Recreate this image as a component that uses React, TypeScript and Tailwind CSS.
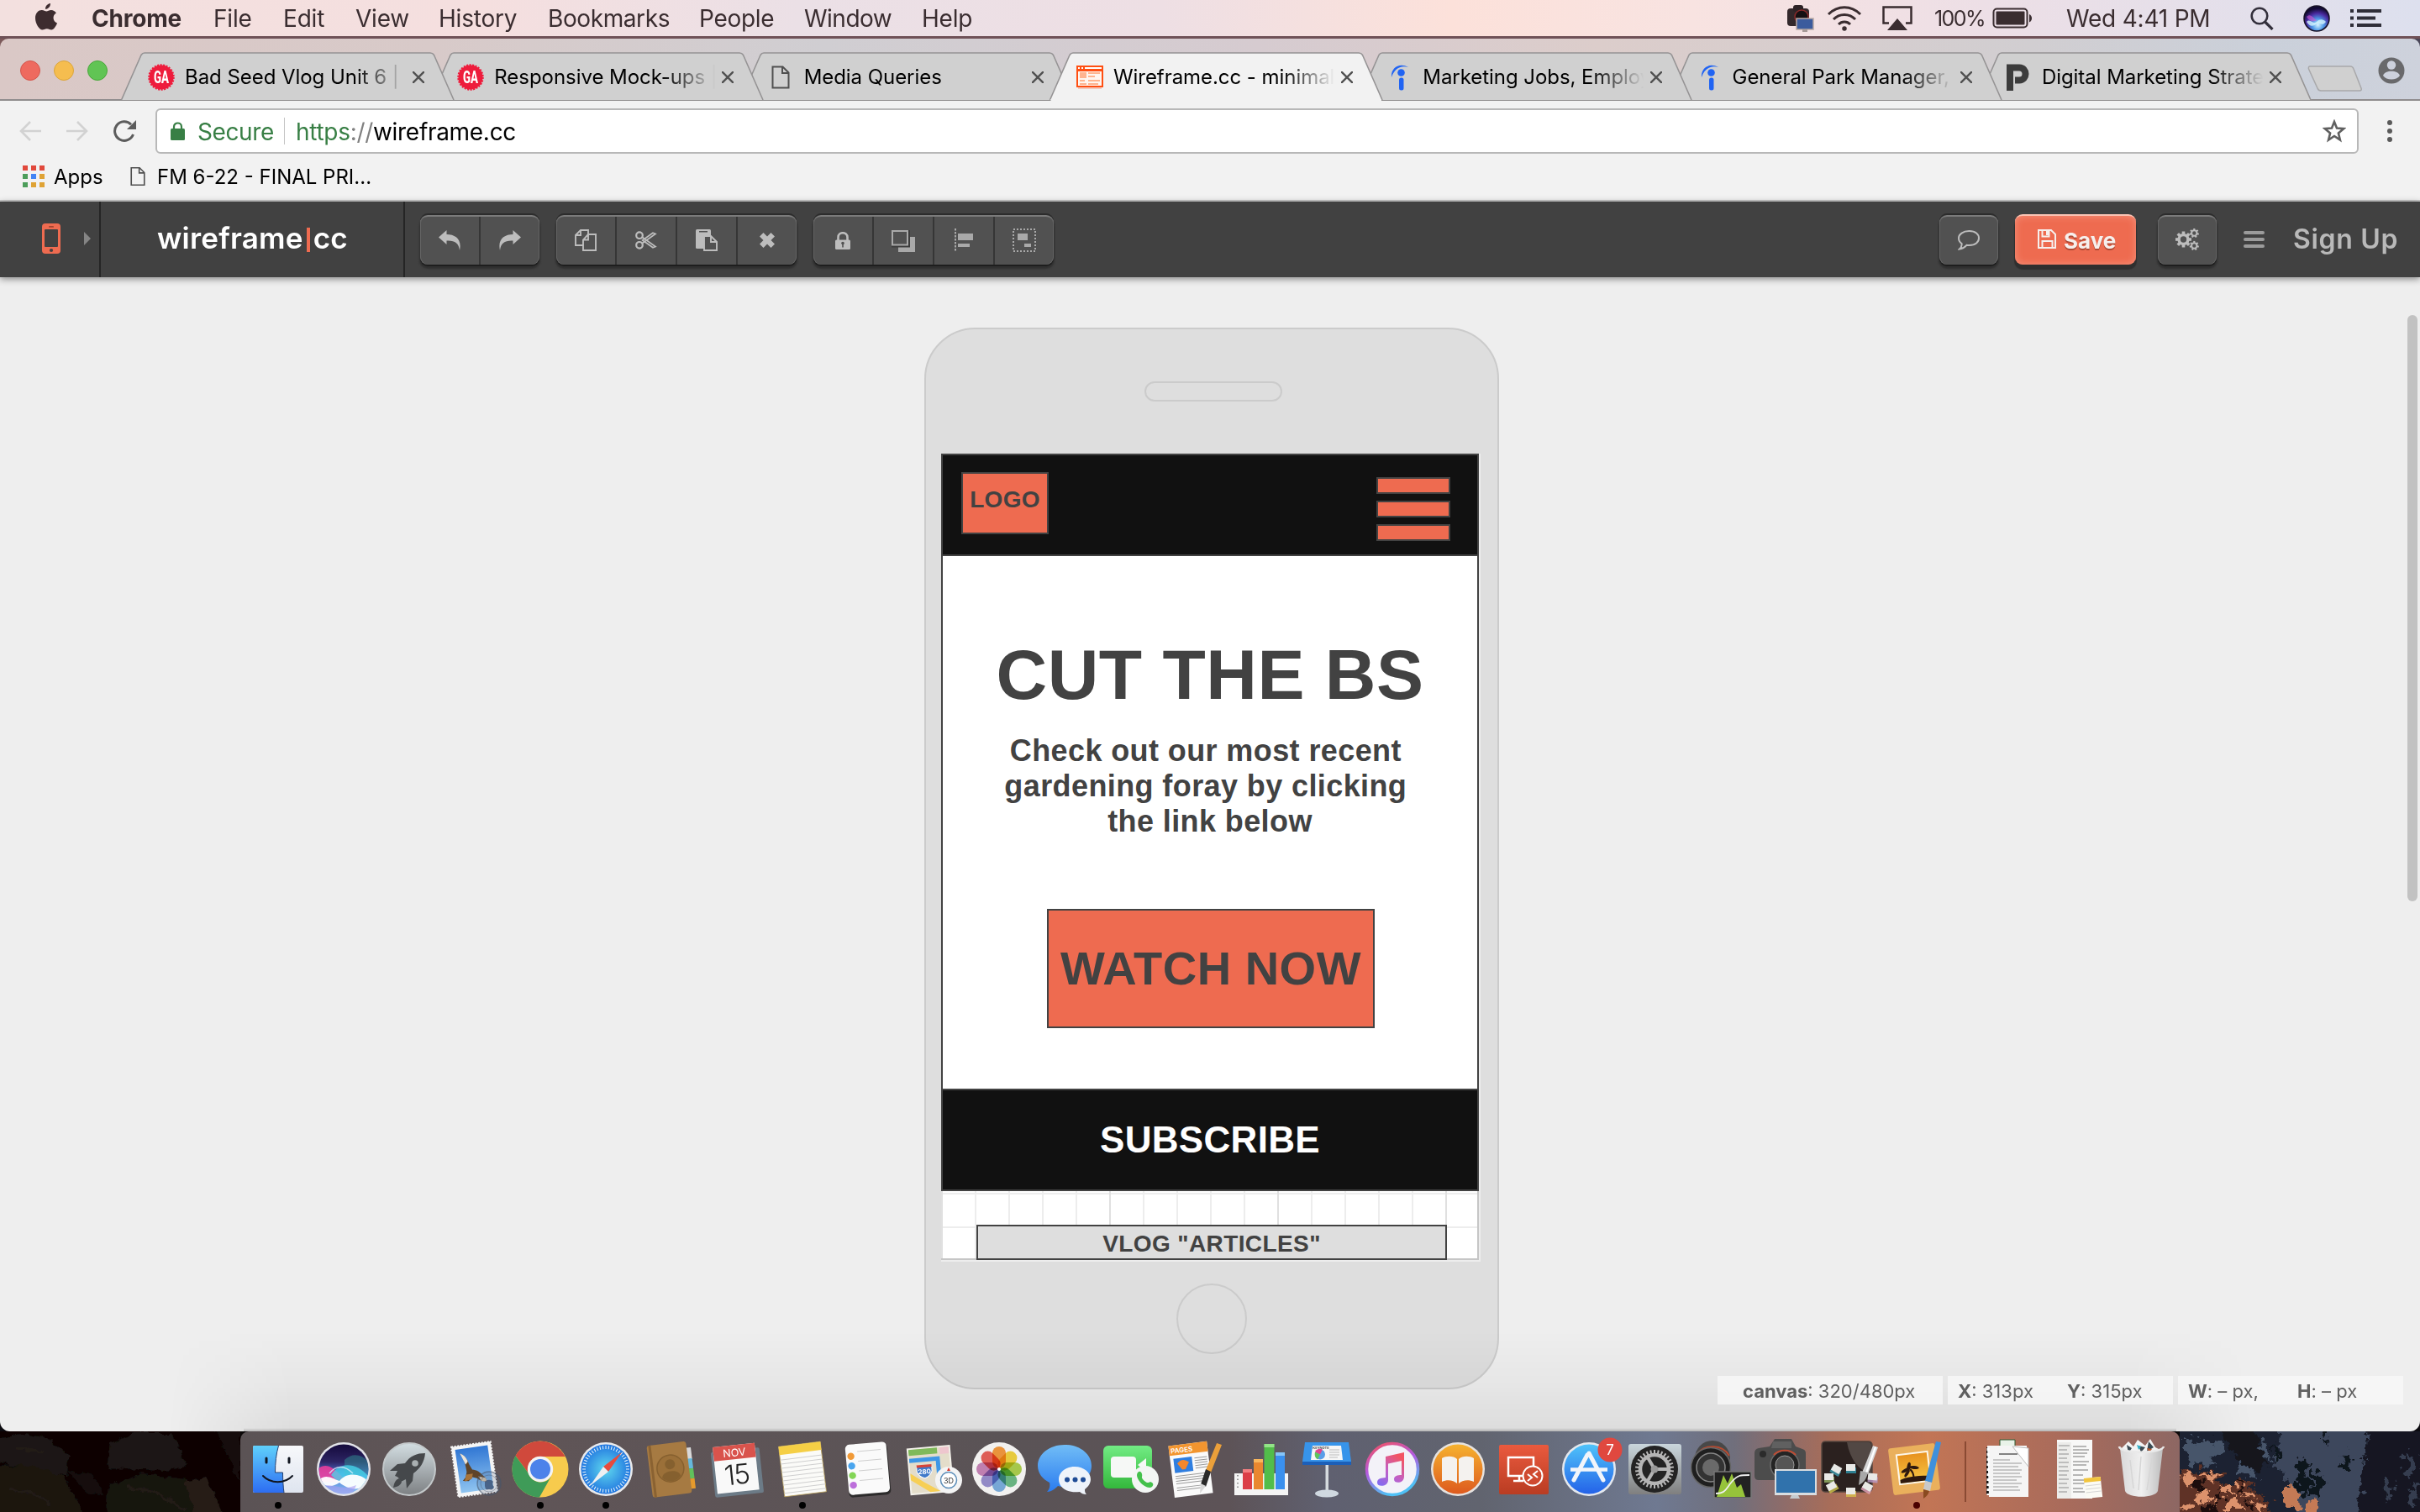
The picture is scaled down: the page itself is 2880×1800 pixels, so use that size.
import React from "react";

type Kids = { children?: React.ReactNode };

/* ---------- macOS menu bar ---------- */

const menus = [
  { t: "Chrome", c: "w-[145px] font-bold" },
  { t: "File", c: "w-[83px]" },
  { t: "Edit", c: "w-[86px]" },
  { t: "View", c: "w-[99px]" },
  { t: "History", c: "w-[130px]" },
  { t: "Bookmarks", c: "w-[180px] tracking-[-0.4px]" },
  { t: "People", c: "w-[125px] tracking-[-0.3px]" },
  { t: "Window", c: "w-[140px] tracking-[-0.5px]" },
  { t: "Help", c: "w-[80px]" },
];

function Apple({ className }: { className: string }) {
  return (
    <svg viewBox="0 0 26 32" className={className} fill="currentColor">
      <path d="M18 0c.3 3.600-2.800 7-6 6.800C11.600 3.600 14.800.3 18 0z" />
      <path d="M13.300 9.500c1.400 0 3-1.500 5.600-1.500 2.300 0 4.700 1.300 6 3.400-5 2.900-4.200 9.900 1.100 12C24.700 27 22 31.400 19.200 31.500c-2 0-2.700-1.300-5.400-1.300s-3.400 1.300-5.400 1.300C4.700 31.400 0 24 0 17.500 0 11.300 4 8 7.700 8c2.400 0 4 1.500 5.600 1.500z" />
    </svg>
  );
}

function MenuBar() {
  return (
    <div className="flex h-[46px] items-center border-b-[3px] border-[#6f5157] bg-[linear-gradient(90deg,#f3e0df,#f5dfdf_20%,#ebe0e6_33%,#eedfe4_48%,#fce1da_60%,#f8e3e1_70%,#eddfe6_82%,#dde0ee)] pl-[42px] text-[28px] leading-[44px] tracking-[-0.2px] text-[#3a2d30]">
      <Apple className="mb-[3px] mr-[41px] h-[32px] w-[26px] shrink-0 text-[#3d2c2f]" />
      {menus.map((m) => (
        <span key={m.t} className={"shrink-0 whitespace-nowrap " + m.c}>
          {m.t}
        </span>
      ))}
      <div className="ml-[949px] flex items-center">
        <svg viewBox="0 0 34 34" className="h-[34px] w-[34px]">
          <rect x="1" y="5" width="26" height="21" rx="4" fill="#33282b" />
          <rect x="8" y="1" width="12" height="8" rx="3" fill="#2d2326" />
          <circle cx="18" cy="15" r="8" fill="#151012" stroke="#8a2a2a" strokeWidth="1.500" />
          <rect x="12" y="17" width="20" height="13" fill="#3b5b9d" stroke="#b9a9a4" strokeWidth="1.500" />
          <path d="M19 30h6v3h-6z" fill="#a79a98" />
        </svg>
        <svg viewBox="0 0 42 30" className="ml-[14px] h-[30px] w-[42px]" fill="none" stroke="#3a2d30" strokeWidth="3">
          <path d="M2 10C13-1 29-1 40 10M8 16c7-7.500 19-7.500 26 0M14 22c4-4 10-4 14 0" />
          <circle cx="21" cy="27" r="2" fill="#3a2d30" strokeWidth="1.500" />
        </svg>
        <svg viewBox="0 0 36 30" className="ml-[24px] h-[30px] w-[36px]">
          <path d="M8 20.500H1.500v-19h33v19H28" fill="none" stroke="#3a2d30" strokeWidth="2.500" />
          <path d="M18 15l12 14H6z" fill="#3a2d30" />
        </svg>
        <span className="ml-[26px] w-[69px] text-[25px] tracking-[-1.600px]">100%</span>
        <svg viewBox="0 0 48 26" className="h-[26px] w-[48px]">
          <rect x="1.500" y="1.500" width="40" height="22" rx="4" fill="none" stroke="#3a2d30" strokeWidth="2" />
          <rect x="4.500" y="4.500" width="34" height="16" rx="1" fill="#3a2d30" />
          <path d="M44 8c4 1.500 4 8 0 9.500z" fill="#3a2d30" />
        </svg>
        <span className="ml-[40px] w-[219px] whitespace-nowrap tracking-[-0.200px]">Wed 4:41 PM</span>
        <svg viewBox="0 0 28 28" className="h-[28px] w-[28px]" fill="none" stroke="#33303c" strokeWidth="2.600">
          <circle cx="11" cy="11" r="9.300" />
          <path d="M17.500 18l9 9" strokeWidth="3.200" />
        </svg>
        <svg viewBox="0 0 32 32" className="ml-[35px] h-[32px] w-[32px]">
          <defs>
            <radialGradient id="mb-siri" cx="55%" cy="75%" r="65%">
              <stop offset="0" stopColor="#d9f4ff" />
              <stop offset="0.350" stopColor="#4f9be8" />
              <stop offset="0.700" stopColor="#4a2aa0" />
              <stop offset="1" stopColor="#120a33" />
            </radialGradient>
          </defs>
          <circle cx="16" cy="16" r="15" fill="url(#mb-siri)" stroke="#151024" strokeWidth="1.500" />
          <path d="M4 20c4-5 8 4 12 0s8-3 11 0c-4 6-8 0-12 3s-8 2-11-3z" fill="#d5f4fc" opacity=".8" />
          <path d="M4 14c5-5 8 2 12 4-4 3-9 1-12-4z" fill="#d45ad0" opacity=".6" />
        </svg>
        <svg viewBox="0 0 38 22" className="ml-[24px] h-[22px] w-[38px]" fill="#2f2e38">
          <path d="M0 0h4v4H0zM8 0h29v4H8zM0 8.500h4v4H0zM8 8.500h22v4H8zM0 17h4v4H0zM8 17h29v4H8z" />
        </svg>
      </div>
    </div>
  );
}

/* ---------- Chrome tabs ---------- */

function GaIcon() {
  return (
    <svg viewBox="0 0 32 32" className="h-[32px] w-[32px]">
      <circle cx="16" cy="16" r="14.500" fill="#ee1c3c" stroke="#ee1c3c" strokeWidth="2.500" strokeDasharray="2 1.500" />
      <text transform="translate(16 23) scale(.68 1)" textAnchor="middle" fontSize="19.500" fontWeight="800" fill="#fff" fontFamily="Roboto">
        GA
      </text>
    </svg>
  );
}

function DocIcon({ className }: { className: string }) {
  return (
    <svg viewBox="0 0 22 28" className={className} fill="none" stroke="#505050" strokeWidth="2">
      <path d="M1.500 1.500h12l7 7v18h-19zM13 1.500v7.500h7.500" />
    </svg>
  );
}

function WireIcon() {
  return (
    <svg viewBox="0 0 32 28" className="h-[28px] w-[32px]">
      <path d="M2 26h28v2H2z" fill="#f3c9bd" />
      <path d="M0 0h32v26H0z" fill="#ff4f12" />
      <path d="M2 7h28v17H2z" fill="#fff6f0" />
      <path d="M2 2h2v2H2zM6 2h2v2H6zM10 2h20v2H10z" fill="#fff" />
      <path d="M4 8h8v7H4zM14 8h14v2H14zM14 12h8v2h-8zM4 17h6v2H4zM14 17h14v2H14zM4 21h8v2H4zM14 21h12v2H14z" fill="#ffb48f" />
    </svg>
  );
}

function IndeedIcon() {
  return (
    <svg viewBox="0 0 32 32" className="h-[32px] w-[32px]">
      <path d="M7 16C6 5 16-2 27 4 17 1 10 7 7 16z" fill="#2164f3" />
      <circle cx="18.500" cy="10.500" r="4.300" fill="#2164f3" />
      <rect x="16" y="16.500" width="5.500" height="15" rx="2.500" fill="#2164f3" />
    </svg>
  );
}

function PIcon() {
  return (
    <svg viewBox="0 0 32 32" className="h-[32px] w-[32px]" fill="none" stroke="#3c3c3c" strokeWidth="8">
      <path d="M6 32V4.500H17c10 0 10 15 0 15H12" />
    </svg>
  );
}

const tabs = [
  { t: "Bad Seed Vlog Unit 6 |", icon: <GaIcon />, z: "z-[7]", active: false },
  { t: "Responsive Mock-ups |", icon: <GaIcon />, z: "z-[6]", active: false },
  { t: "Media Queries", icon: <DocIcon className="ml-[5px] h-[28px] w-[22px]" />, z: "z-[5]", active: false },
  { t: "Wireframe.cc - minimal", icon: <WireIcon />, z: "z-[9]", active: true },
  { t: "Marketing Jobs, Employ", icon: <IndeedIcon />, z: "z-[4]", active: false },
  { t: "General Park Manager,", icon: <IndeedIcon />, z: "z-[3]", active: false },
  { t: "Digital Marketing Strate", icon: <PIcon />, z: "z-[2]", active: false },
];

function TabStrip() {
  return (
    <div className="flex h-[74px] rounded-t-[10px] border-b-2 border-[#8f8c8d] bg-[linear-gradient(90deg,#dac8c6,#d8cac9_18%,#d0ced2_34%,#d6cbd0_52%,#dccdcb_66%,#d1ced1_84%,#cad0da_94%,#ced2dc)]">
      <div className="flex w-[144px] shrink-0 items-center gap-[16px] pl-[24px] pt-[4px]">
        <span className="h-[24px] w-[24px] rounded-full border border-[#d4554c] bg-[#ee6a5f]" />
        <span className="h-[24px] w-[24px] rounded-full border border-[#dba53a] bg-[#f5bd4f]" />
        <span className="h-[24px] w-[24px] rounded-full border border-[#4aa73c] bg-[#61c454]" />
      </div>
      {tabs.map((tab) => (
        <div key={tab.t} className={"relative -mr-[28.200px] mt-[16px] h-[58px] w-[396.500px] shrink-0 " + tab.z}>
          <svg viewBox="0 0 396.500 58" className="absolute inset-0 h-[58px] w-[396.500px] overflow-visible">
            <path
              d="M.5 57L24 3.500Q25.500 1 28 1H368Q371 1 372.500 3.500L396 57"
              fill={tab.active ? "#f2f2f2" : "#d0d0d0"}
              stroke="#959394"
              strokeWidth="1.600"
            />
            {tab.active && <path d="M1.500 56h393.500v2H1.500z" fill="#f2f2f2" />}
          </svg>
          <div className="relative flex h-[58px] items-center pl-[32px] pt-[1px]">
            <span className="flex w-[44px]">{tab.icon}</span>
            <span className="w-[266px] overflow-hidden whitespace-pre text-[24px] leading-[32px] tracking-[-0.050px] text-black [mask-image:linear-gradient(90deg,#000_76%,transparent_99%)]">
              {tab.t}
            </span>
            <svg viewBox="0 0 14 14" className="ml-[5px] h-[14px] w-[14px]" stroke="#515151" strokeWidth="2.400">
              <path d="M0 0l14 14M14 0L0 14" />
            </svg>
          </div>
        </div>
      ))}
      <svg viewBox="0 0 66 32" className="ml-[24px] mt-[32px] h-[32px] w-[66px]">
        <path d="M3 1h48q3 0 4 3l9 23q1 3-2 3H16q-3 0-4-3L1.500 4Q1 1 3 1z" fill="#d0d0d0" stroke="#a8a8aa" strokeWidth="1.500" />
      </svg>
      <svg viewBox="0 0 32 32" className="ml-[18px] mt-[22px] h-[32px] w-[32px]">
        <circle cx="16" cy="16" r="15.500" fill="#69696b" />
        <circle cx="16" cy="9.500" r="5.200" fill="#cdd1dc" />
        <path d="M6 22c2-7 18-7 20 0-4 6-16 6-20 0z" fill="#cdd1dc" />
      </svg>
    </div>
  );
}

/* ---------- Chrome address and bookmark bars ---------- */

function AddressBar() {
  return (
    <div className="flex h-[72px] items-center bg-[#f2f2f2] pl-[23px]">
      <svg viewBox="0 0 26 24" className="h-[24px] w-[26px]" fill="none" stroke="#d2d2d2" strokeWidth="2.600">
        <path d="M26 12H2M13 1L2 12l11 11" />
      </svg>
      <svg viewBox="0 0 26 24" className="ml-[30px] h-[24px] w-[26px]" fill="none" stroke="#d2d2d2" strokeWidth="2.600">
        <path d="M0 12h24M13 1l11 11-11 11" />
      </svg>
      <svg viewBox="0 0 28 26" className="ml-[29px] h-[26px] w-[28px]" fill="none" stroke="#5c5c5c" strokeWidth="3">
        <path d="M24.500 17A11.300 11.300 0 1 1 22 5.200" />
        <path d="M28 0v11H17z" fill="#5c5c5c" stroke="none" />
      </svg>
      <div className="ml-[23px] flex h-[54px] w-[2622px] items-center rounded-[6px] border-2 border-[#b8b8b8] bg-white pl-[16px] text-[28px]">
        <svg viewBox="0 0 17 22" className="mb-[1px] h-[22px] w-[17px]">
          <rect y="8" width="17" height="14" rx="1.500" fill="#387f45" />
          <path d="M4 9V6c0-6 9-6 9 0v3" fill="none" stroke="#387f45" strokeWidth="2.200" />
        </svg>
        <span className="ml-[15px] w-[103px] pt-[2px] tracking-[-0.400px] text-[#387f45]">Secure</span>
        <span className="h-[32px] w-[1px] bg-[#c4c4c4]" />
        <span className="ml-[13px] grow whitespace-nowrap pt-[2px] tracking-[-0.300px] text-black">
          <span className="text-[#387f45]">https</span>
          <span className="text-[#808080]">://</span>wireframe.cc
        </span>
        <svg viewBox="0 0 28 28" className="mr-[13px] h-[28px] w-[28px]" fill="none" stroke="#606060" strokeWidth="2.600">
          <path d="M14 3l3 7.600 8.200.6-6.300 5.300 2 8L14 20l-6.900 4.500 2-8-6.300-5.300 8.200-.6z" />
        </svg>
      </div>
      <div className="ml-[34px] flex flex-col gap-[4px]">
        <span className="h-[6px] w-[6px] rounded-full bg-[#5a5a5a]" />
        <span className="h-[6px] w-[6px] rounded-full bg-[#5a5a5a]" />
        <span className="h-[6px] w-[6px] rounded-full bg-[#5a5a5a]" />
      </div>
    </div>
  );
}

const appDots = [
  "bg-[#e1493c]", "bg-[#e1493c]", "bg-[#e1493c]",
  "bg-[#4d9e5b]", "bg-[#4285f4]", "bg-[#dfa335]",
  "bg-[#4d9e5b]", "bg-[#dfa335]", "bg-[#dfa335]",
];

function BookmarkBar() {
  return (
    <div className="flex h-[48px] items-center border-b-2 border-[#c9c9c9] bg-[#f2f2f2] pb-[11px] pl-[27px] text-[24px] text-black">
      <div className="grid grid-cols-3 gap-[4px]">
        {appDots.map((c, i) => (
          <span key={i} className={"h-[6px] w-[6px] " + c} />
        ))}
      </div>
      <span className="ml-[11px] w-[91px] pt-[3px]">Apps</span>
      <DocIcon className="h-[24px] w-[18px]" />
      <span className="ml-[14px] whitespace-nowrap pt-[3px]">FM 6-22 - FINAL PRI...</span>
    </div>
  );
}

/* ---------- wireframe.cc toolbar ---------- */

function Btn({ children }: Kids) {
  return (
    <div className="flex h-full grow basis-0 items-center justify-center border-l-2 border-[#363636] first:border-l-0">
      {children}
    </div>
  );
}

function Group({ className, children }: Kids & { className: string }) {
  return (
    <div
      className={
        "flex h-[59px] shrink-0 overflow-visible rounded-[9px] border-t-2 border-[#7b7b7b] bg-[#515151] shadow-[0_2px_0_#1e1e1e,0_4px_2px_1px_#303030,0_-2px_0_#2c2c2c,inset_1px_0_0_#646464,inset_-1px_0_0_#646464] " +
        className
      }
    >
      {children}
    </div>
  );
}

function Gear({ x, y, r, n }: { x: number; y: number; r: number; n: number }) {
  const teeth = Array.from({ length: n }, (_, i) => i);
  return (
    <g transform={`translate(${x} ${y})`}>
      <circle r={r * 0.57} fill="none" stroke="#bdbdbd" strokeWidth={r * 0.36} />
      {teeth.map((i) => (
        <rect key={i} x={-r * 0.19} y={-r} width={r * 0.38} height={r * 0.36} fill="#bdbdbd" transform={`rotate(${(360 / n) * i})`} />
      ))}
    </g>
  );
}

function WireToolbar() {
  return (
    <div className="relative z-10 flex h-[90px] items-center bg-[#414141] shadow-[0_2px_8px_rgba(0,0,0,0.45)]">
      <div className="flex h-full w-[120px] shrink-0 items-center border-r-2 border-[#252525] pb-[2px] pl-[50px]">
        <svg viewBox="0 0 22 36" className="h-[36px] w-[22px]">
          <rect width="22" height="36" rx="4" fill="#ee6b50" />
          <rect x="3" y="7" width="16" height="21" rx="1" fill="#414141" />
          <rect x="8" y="3" width="6" height="1.800" rx=".9" fill="#a3432f" />
          <circle cx="11" cy="32" r="2.100" fill="#414141" />
        </svg>
        <svg viewBox="0 0 8 16" className="ml-[28px] h-[16px] w-[8px]">
          <path d="M0 0l8 8-8 8z" fill="#858585" />
        </svg>
      </div>
      <div className="flex h-full w-[362px] shrink-0 items-center border-r-2 border-[#252525] pb-[3px] pl-[67px] text-[35px] font-semibold tracking-[0.200px] text-white">
        <span>wireframe</span>
        <span className="mx-[4px] mt-[4px] h-[29px] w-[4px] bg-[#ee6b50]" />
        <span>cc</span>
      </div>
      <Group className="ml-[18px] w-[142px]">
        <Btn>
          <svg viewBox="0 0 26 24" className="h-[24px] w-[26px]">
            <path d="M0 8.500L9.500 0v5C20 5 28 11 25 24 24 15 19 12 9.500 12.500V17z" fill="#bdbdbd" />
          </svg>
        </Btn>
        <Btn>
          <svg viewBox="0 0 26 24" className="h-[24px] w-[26px]">
            <path d="M26 8.500L16.500 0v5C6 5-2 11 1 24 2 15 7 12 16.500 12.500V17z" fill="#bdbdbd" />
          </svg>
        </Btn>
      </Group>
      <Group className="ml-[20px] w-[286px]">
        <Btn>
          <svg viewBox="0 0 26 26" className="h-[26px] w-[26px]" fill="#515151" stroke="#bdbdbd" strokeWidth="1.900">
            <path d="M1 19V7l6-6h9v18zM7 1v6H1" />
            <path d="M10 25V12.500L16 6h9v19zM16 6v6.500h-6" />
          </svg>
        </Btn>
        <Btn>
          <svg viewBox="0 0 26 22" className="h-[22px] w-[26px]" fill="none" stroke="#bdbdbd" strokeWidth="2.200">
            <circle cx="5" cy="5.200" r="3.800" />
            <circle cx="5" cy="16.800" r="3.800" />
            <path d="M8.500 7.500L24 18.500l-3 1.200L8 10.500M8.500 14.500L24 3.500l-3-1.200-13 9.200" strokeWidth="1.700" />
          </svg>
        </Btn>
        <Btn>
          <svg viewBox="0 0 26 26" className="h-[26px] w-[26px]">
            <path d="M1.500 0h15q1.500 0 1.500 1.500V23H1.500Q0 23 0 21.500v-20Q0 0 1.500 0z" fill="#bdbdbd" />
            <path d="M4 2h10v1.500H4z" fill="#515151" />
            <path d="M10 25V8h8l7 7v10zM18 8v7h7" fill="#515151" stroke="#bdbdbd" strokeWidth="1.900" />
          </svg>
        </Btn>
        <Btn>
          <svg viewBox="0 0 18 18" className="h-[18px] w-[18px]">
            <path d="M4.500 0L9 4.500 13.500 0 18 4.500 13.500 9l4.500 4.500-4.500 4.500L9 13.500 4.500 18 0 13.500 4.500 9 0 4.500z" fill="#bdbdbd" />
          </svg>
        </Btn>
      </Group>
      <Group className="ml-[20px] w-[286px]">
        <Btn>
          <svg viewBox="0 0 18 21" className="h-[21px] w-[18px]">
            <rect y="9.500" width="18" height="11.500" rx="1.500" fill="#bdbdbd" />
            <path d="M3.500 10V6.500c0-7 11-7 11 0V10" fill="none" stroke="#bdbdbd" strokeWidth="2.600" />
            <circle cx="9" cy="13.500" r="1.800" fill="#515151" />
            <path d="M8.200 14h1.600v4.500H8.200z" fill="#515151" />
          </svg>
        </Btn>
        <Btn>
          <svg viewBox="0 0 28 28" className="h-[28px] w-[28px]">
            <path d="M8 10h20v18H8z" fill="#a9a9a9" />
            <path d="M0 2h22v20.500H0z" fill="#3c3c3c" />
            <path d="M1 3h18v16.500H1z" fill="#515151" stroke="#a9a9a9" strokeWidth="2" />
          </svg>
        </Btn>
        <Btn>
          <svg viewBox="0 0 22 28" className="h-[28px] w-[22px]">
            <path d="M1 0v28" stroke="#a9a9a9" strokeWidth="2" strokeDasharray="2.500 1.500" />
            <path d="M4 6h18v8H4zM4 18h14v4H4z" fill="#a9a9a9" />
          </svg>
        </Btn>
        <Btn>
          <svg viewBox="0 0 28 28" className="h-[28px] w-[28px]">
            <rect x="1" y="1" width="26" height="26" fill="none" stroke="#a9a9a9" strokeWidth="2" strokeDasharray="2 2" />
            <path d="M6 6h12v8H6zM14 18h8v4h-8z" fill="#a9a9a9" />
          </svg>
        </Btn>
      </Group>
      <div className="grow" />
      <Group className="w-[70px]">
        <Btn>
          <svg viewBox="0 0 26 24" className="h-[24px] w-[26px]" fill="none" stroke="#bdbdbd" strokeWidth="2">
            <path d="M13.500 1C21 1 25 5 25 9.500S21 18 13.500 18c-1 0-2 0-3-.2C8.500 20 5.500 22 2 22.500c2-2 3-3.500 2.600-6.500C2.500 14.500 1 12.500 1 9.500 1 5 6 1 13.500 1z" />
          </svg>
        </Btn>
      </Group>
      <div className="ml-[20px] flex h-[60px] w-[144px] shrink-0 items-center rounded-[9px] border-t-2 border-[#fbc4b5] bg-[#ee6b50] pl-[27px] text-[26px] font-bold text-[#f6efed] shadow-[0_5px_1px_1px_#2f2f2f,inset_0_0_10px_#f5937c]">
        <svg viewBox="0 0 22 23" className="mb-[3px] h-[23px] w-[22px]" fill="none" stroke="#f6efed" strokeWidth="2">
          <path d="M1 1h15l5 5v16H1zM5.500 22v-8h12v8M5.500 1v7.500h8V1" />
          <path d="M10 2h3v5h-3z" fill="#f6efed" stroke="none" />
        </svg>
        <span className="ml-[9px] [text-shadow:0_2px_0_#b04a35]">Save</span>
      </div>
      <Group className="ml-[26px] w-[70px]">
        <Btn>
          <svg viewBox="0 0 28 26" className="mb-[2px] h-[26px] w-[28px]">
            <Gear x={9.5} y={13} r={9.5} n={8} />
            <Gear x={22.300} y={5.5} r={5.6} n={7} />
            <Gear x={22.300} y={20.500} r={5.6} n={7} />
          </svg>
        </Btn>
      </Group>
      <div className="ml-[32px] flex flex-col gap-[4px]">
        <span className="h-[4px] w-[25px] rounded-sm bg-[#9b9b9b]" />
        <span className="h-[4px] w-[25px] rounded-sm bg-[#9b9b9b]" />
        <span className="h-[4px] w-[25px] rounded-sm bg-[#9b9b9b]" />
      </div>
      <span className="ml-[34px] mr-[26px] w-[125px] whitespace-nowrap text-[32px] font-semibold tracking-[0.700px] text-[#b9b9b9]">Sign Up</span>
    </div>
  );
}

/* ---------- Phone mock-up ---------- */

function Phone() {
  return (
    <div className="ml-[4px] mt-[60px] flex h-[1264px] w-[684px] flex-col items-center rounded-[61px] border-2 border-[#cbcbcb] bg-[#dedede] font-['Liberation_Sans'] font-bold text-[#424242]">
      <div className="ml-[4px] mt-[62px] h-[24px] w-[164px] rounded-full border-2 border-[#cbcbcb]" />
      <div className="-ml-[2px] mt-[62px] flex h-[962px] w-[642px] flex-col items-start bg-[#ededed]">
        <div className="flex h-[122px] w-[640px] items-start justify-between border-2 border-[#424242] bg-[#111] pl-[22px] pr-[32px] pt-[20px]">
          <div className="flex h-[74px] w-[104px] justify-center border-2 border-[#424242] bg-[#ee6b50] pt-[13px] text-[28px] leading-[36px] tracking-[0.300px]">LOGO</div>
          <div className="mt-[6px] flex flex-col gap-[8px]">
            <span className="h-[20px] w-[88px] border-2 border-[#424242] bg-[#ee6b50]" />
            <span className="h-[20px] w-[88px] border-2 border-[#424242] bg-[#ee6b50]" />
            <span className="h-[20px] w-[88px] border-2 border-[#424242] bg-[#ee6b50]" />
          </div>
        </div>
        <div className="flex h-[634px] w-[640px] flex-col items-center border-x-2 border-[#424242] bg-white">
          <div className="mt-[91px] h-[100px] whitespace-nowrap text-[84px] leading-[100px] tracking-[0.500px]">CUT THE BS</div>
          <div className="mt-[20px] flex w-[520px] flex-col items-center whitespace-pre text-[36px] leading-[42px] tracking-[0.400px]">
            <span>{"Check out our most recent "}</span>
            <span>{"gardening foray by clicking "}</span>
            <span>the link below</span>
          </div>
          <div className="ml-[2px] mt-[83px] flex h-[142px] w-[390px] items-center justify-center whitespace-nowrap border-2 border-[#424242] bg-[#ee6b50] text-[56px] tracking-[0.500px]">
            WATCH NOW
          </div>
        </div>
        <div className="flex h-[122px] w-[640px] items-center justify-center border-2 border-[#424242] bg-[#111] text-[44px] tracking-[0.300px] text-white">
          SUBSCRIBE
        </div>
        <div className="h-[82px] w-[640px] border-b-2 border-r-2 border-[#c6c6c6] bg-white">
          <div className="flex h-[80px] w-[638px] justify-center bg-[linear-gradient(90deg,#e0e0e0_2px,transparent_2px),linear-gradient(180deg,#ededed_2px,transparent_2px),linear-gradient(90deg,#ededed_2px,transparent_2px)] bg-[size:200px_400px,40px_40px,40px_40px] bg-[position:0_0,0_2px,0_0]">
            <div className="ml-[6px] mt-[40px] flex h-[42px] w-[560px] items-center justify-center border-2 border-[#424242] bg-[#dedede] pt-[3px] text-[28px] tracking-[0.400px]">
              VLOG "ARTICLES"
            </div>
          </div>
        </div>
      </div>
      <div className="mt-[26px] h-[84px] w-[84px] rounded-full border-2 border-[#cbcbcb]" />
    </div>
  );
}

function Status() {
  return (
    <div className="mr-[20px] flex w-[816px] items-start justify-between text-[22px] leading-[36px] text-[#606060]">
      <div className="h-[34px] w-[268px] bg-[#f7f7f7]/80 pl-[30px]"><b>canvas</b>: 320/480px</div>
      <div className="flex h-[34px] w-[268px] bg-[#f7f7f7]/80 pl-[12px]">
        <span className="w-[130px]"><b>X</b>: 313px</span>
        <span><b>Y</b>: 315px</span>
      </div>
      <div className="flex h-[34px] w-[268px] bg-[#f7f7f7]/80 pl-[12px]">
        <span className="w-[130px]"><b>W</b>: – px,</span>
        <span><b>H</b>: – px</span>
      </div>
    </div>
  );
}

function Canvas() {
  return (
    <div className="relative flex h-[1374px] flex-col items-center overflow-hidden rounded-b-[12px] bg-[#eee]">
      <Phone />
      <div className="pointer-events-none absolute bottom-0 left-[200px] h-[120px] w-[2480px] bg-[linear-gradient(0deg,rgba(0,0,0,0.075),rgba(0,0,0,0.03)_45%,transparent)] [mask-image:linear-gradient(90deg,transparent,#000_6%,#000_94%,transparent)]" />
      <div className="absolute bottom-[32px] right-0"><Status /></div>
      <div className="absolute right-[3px] top-[45px] h-[698px] w-[12px] rounded-full bg-[#c2c2c2]" />
      <div className="absolute bottom-0 left-[290px] h-[4px] w-[2300px] bg-[linear-gradient(0deg,rgba(0,0,0,0.18),transparent)]" />
    </div>
  );
}

/* ---------- Dock ---------- */

function Grad({ id, a, b }: { id: string; a: string; b: string }) {
  return (
    <linearGradient id={id} x1="0" y1="0" x2="0" y2="1">
      <stop offset="0" stopColor={a} />
      <stop offset="1" stopColor={b} />
    </linearGradient>
  );
}

function Cell({ children, dot }: Kids & { dot?: string }) {
  return (
    <svg viewBox="0 0 78 96" className="h-[96px] w-[78px] shrink-0 overflow-visible">
      {children}
      {dot && <circle cx="39" cy="88" r="4" fill={dot} />}
    </svg>
  );
}

const rays = (n: number) => Array.from({ length: n }, (_, i) => (360 / n) * i);
const petals = ["#f5912a", "#f3d22c", "#a6cf3c", "#5fb77c", "#6fa9e0", "#8f86cf", "#c479b4", "#e8524a"];

function Finder() {
  return (
    <Cell dot="#000">
      <defs><Grad id="fi" a="#5fd0fb" b="#2d6df2" /><Grad id="fi2" a="#f7f8fb" b="#dfe5ef" /></defs>
      <rect x="9" y="17" width="60" height="56" rx="2" fill="url(#fi2)" />
      <path d="M11 17h28.500c-3 10-4 21-4 32h9c0 8 .5 17 1.500 24H11q-2 0-2-2V19q0-2 2-2z" fill="url(#fi)" />
      <path d="M39.500 17c-3 10-4 21-4 32h9c0 8 .5 17 1.500 24" fill="none" stroke="#24406f" strokeWidth="1" />
      <path d="M25 32v5M52 32v5" stroke="#10151f" strokeWidth="3" strokeLinecap="round" />
      <path d="M21 53c9 9.500 26 9.500 35 0" fill="none" stroke="#10151f" strokeWidth="2" strokeLinecap="round" />
    </Cell>
  );
}

function Siri() {
  return (
    <Cell>
      <defs>
        <linearGradient id="si" x1="0" y1="0" x2="0" y2="1">
          <stop offset="0" stopColor="#150a3c" />
          <stop offset=".35" stopColor="#2c2462" />
          <stop offset=".6" stopColor="#4f6fd0" />
          <stop offset="1" stopColor="#86c8f5" />
        </linearGradient>
        <clipPath id="sic"><circle cx="39" cy="45" r="29.500" /></clipPath>
      </defs>
      <circle cx="39" cy="45" r="32" fill="#e2e3e8" />
      <circle cx="39" cy="45" r="29.500" fill="url(#si)" />
      <g clipPath="url(#sic)">
        <path d="M40 34c10-10 22-6 30 4v14H40z" fill="#2f8f94" opacity=".5" />
        <path d="M9 44c8-6 16-4 30 12-8 6-20 6-30 2z" fill="#f23c9a" opacity=".85" />
        <path d="M24 52c8-14 28-18 45 2v10c-16 6-32 2-45-12z" fill="#46d9ee" opacity=".75" />
        <path d="M22 50c8-10 18-10 28 0" fill="none" stroke="#d6eefc" strokeWidth="1.500" opacity=".8" />
        <path d="M9 58c9-8 16-2 25 1 8-10 24-10 35 1-10 12-24 10-35 1-9 6-17 6-25-3z" fill="#fff" opacity=".95" />
        <path d="M14 66c12-6 22 6 40-2l-6 14H26z" fill="#a99bf0" opacity=".6" />
      </g>
    </Cell>
  );
}

function Launchpad() {
  return (
    <Cell>
      <defs><Grad id="la" a="#d3dee2" b="#7d8083" /></defs>
      <circle cx="39" cy="45" r="31" fill="url(#la)" stroke="#c3c8ca" strokeWidth="2" />
      <path d="M58 26c-10 0-18 3-24 12l-9 1-9 8h9l-3 6c4 1 6 4 7 7l6-3 1 11 7-9 1-9c8-6 13-13 14-24z" fill="#45484b" />
      <circle cx="46" cy="38" r="3.800" fill="#a9b0b2" />
      <path d="M27 56c-5 2-6 6-7 11 5-1 9-3 10-7z" fill="#45484b" />
    </Cell>
  );
}

function Mail() {
  return (
    <Cell>
      <defs><Grad id="ma" a="#3177d4" b="#8fc4f0" /></defs>
      <g transform="rotate(-8 39 45)">
        <rect x="15" y="15" width="47" height="60" fill="#f5f5f5" stroke="#f5f5f5" strokeWidth="2" strokeDasharray="2 1.600" />
        <rect x="19" y="19" width="39" height="52" fill="url(#ma)" />
        <path d="M24 24c5 3 8 8 9 14l3 7c5 1 9 4 14 12l2 5c-5-1-9-3-12-6l-5-2-5 4-7-1 4-4 2-6c0-9-1-16-5-23z" fill="#5f4428" />
        <path d="M24 24c4 2 7 6 8 11l-3 3z" fill="#ece5da" />
        <path d="M42 54l8 3 2 5-7-2z" fill="#d9c9b0" />
        <path d="M28 50l8 0-2 6-9 2z" fill="#a8743a" />
      </g>
      <circle cx="56" cy="62" r="14" fill="#4a5b72" fillOpacity=".2" stroke="#46566c" strokeOpacity=".55" strokeWidth="1.500" />
      <circle cx="56" cy="62" r="10" fill="none" stroke="#46566c" strokeOpacity=".4" strokeWidth="1" />
      <path d="M51 60c2-3 8-3 10 0-2 3 0 5 1 6-2 5-4 3-6 3s-4 2-5-4z" fill="#3d5374" opacity=".8" />
    </Cell>
  );
}

function ChromeIcon() {
  return (
    <Cell dot="#000">
      <circle cx="39" cy="45" r="33.500" fill="#f7cb4d" />
      <path d="M9.500 29A33.500 33.500 0 0 1 68.500 30H39a15 15 0 0 0-14 20z" fill="#d0493c" />
      <path d="M9.500 29A33.500 33.500 0 0 0 38 78.500l14-25A15 15 0 0 1 25 50z" fill="#3f9b58" />
      <circle cx="39" cy="45" r="15.200" fill="#f4f4f4" />
      <circle cx="39" cy="45" r="12" fill="#4c82ea" />
    </Cell>
  );
}

function Safari() {
  return (
    <Cell dot="#000">
      <defs><radialGradient id="sa"><stop offset="0" stopColor="#5fd8ee" /><stop offset="1" stopColor="#2277e0" /></radialGradient></defs>
      <circle cx="39" cy="45" r="32" fill="#e9eaec" />
      <circle cx="39" cy="45" r="29.500" fill="url(#sa)" />
      {rays(48).map((a) => (
        <path key={a} d="M39 17v4" stroke="#e9f4fb" strokeWidth="1" transform={`rotate(${a} 39 45)`} />
      ))}
      <path d="M58 25L42 48l-6-6z" fill="#e84b3c" />
      <path d="M20 65l16-23 6 6z" fill="#eef0f2" />
    </Cell>
  );
}

function Contacts() {
  return (
    <Cell>
      <g transform="rotate(-7 39 45)">
        <path d="M58 22h7v14h-7z" fill="#d9d9d9" /><path d="M58 35h7v12h-7z" fill="#66b8dc" />
        <path d="M58 47h7v12h-7z" fill="#60c25c" /><path d="M58 59h7v12h-7z" fill="#e59a2d" />
        <rect x="13" y="14" width="47" height="62" rx="3" fill="#a67a42" />
        <path d="M15 14h3v62h-3z" fill="#8a6232" />
        <circle cx="38" cy="44" r="16" fill="#9b7039" stroke="#86602f" strokeWidth="1.500" />
        <circle cx="38" cy="39" r="6" fill="#85602f" />
        <path d="M27 54c1-9 21-9 22 0-6 7-16 7-22 0z" fill="#85602f" />
      </g>
    </Cell>
  );
}

function Calendar() {
  return (
    <Cell>
      <g transform="rotate(-6 39 45)">
        <rect x="10" y="22" width="58" height="54" rx="2" fill="#6c7b87" />
        <rect x="13" y="16" width="50" height="56" fill="#f9f9f9" />
        <rect x="13" y="16" width="50" height="17" fill="#d9534c" />
        <text x="38" y="29.500" textAnchor="middle" fontSize="12.500" fill="#fff" fontFamily="Inter">NOV</text>
        <text x="38" y="63" textAnchor="middle" fontSize="33" fontWeight="300" letterSpacing="-1.500" fill="#222" fontFamily="Inter">15</text>
      </g>
    </Cell>
  );
}

function Notes() {
  return (
    <Cell dot="#000">
      <g transform="rotate(-7 39 45)">
        <rect x="14" y="15" width="50" height="60" fill="#fbfbf8" stroke="#b9a05a" strokeWidth=".8" />
        <rect x="14" y="15" width="50" height="10" fill="#f5cf45" />
        <path d="M14 31h50M14 36h50M14 41h50M14 46h50M14 51h50M14 56h50M14 61h50M14 66h50M14 71h50" stroke="#cfcfcf" strokeWidth="1" />
      </g>
    </Cell>
  );
}

function Reminders() {
  const dots = ["#f19a37", "#4aa5ee", "#83d556", "#bd6fdb"];
  return (
    <Cell>
      <g transform="rotate(-5 39 45)">
        <rect x="14" y="16" width="50" height="61" rx="5" fill="#2c2b2b" />
        <rect x="14" y="14" width="49" height="60" rx="5" fill="#fafafa" />
        {dots.map((c, i) => (
          <g key={c}>
            <circle cx="20" cy={28 + i * 11.500} r="4.200" fill={c} />
            <path d={`M28 ${23 + i * 11.500}h28`} stroke="#cfcfcf" strokeWidth="1" />
          </g>
        ))}
      </g>
    </Cell>
  );
}

function Maps() {
  return (
    <Cell>
      <g transform="rotate(-5 36 45)">
        <rect x="9" y="18" width="52" height="56" fill="#f3f1ea" />
        <rect x="11" y="20" width="48" height="52" fill="#e4ddca" />
        <path d="M11 20h34v7H11z" fill="#7fb95a" />
        <path d="M48 20h11v8H48z" fill="#eec6ce" />
        <path d="M11 33h34v34" fill="none" stroke="#3f97e6" strokeWidth="5" />
        <path d="M11 48l16 12 18 12h-12L11 56z" fill="#f7cf55" />
        <path d="M19 40h18v7q-2 6-9 8-7-2-9-8z" fill="#3f79c9" stroke="#fff" strokeWidth="1" />
        <path d="M19 39h18v3H19z" fill="#d84436" />
        <text x="28" y="50" textAnchor="middle" fontSize="8" fontWeight="700" fill="#fff" fontFamily="Inter">280</text>
      </g>
      <circle cx="57" cy="58" r="16" fill="#f4f4f4" />
      <circle cx="57" cy="58" r="9.500" fill="#fff" stroke="#5b8db8" strokeWidth="1.500" />
      <path d="M57 43l2 4h-4z" fill="#d8372b" />
      <text x="57" y="61.500" textAnchor="middle" fontSize="9" fill="#333" fontFamily="Inter">3D</text>
    </Cell>
  );
}

function Photos() {
  return (
    <Cell>
      <circle cx="39" cy="45" r="32" fill="#f2f1f0" />
      {petals.map((c, i) => (
        <rect key={c} x="31" y="18" width="16" height="26" rx="8" fill={c} className="mix-blend-multiply" opacity=".9" transform={`rotate(${i * 45} 39 45)`} />
      ))}
      <circle cx="39" cy="45" r="2" fill="#fff" />
    </Cell>
  );
}

function Messages() {
  return (
    <Cell>
      <defs><Grad id="me" a="#71bdf6" b="#2b7cf0" /></defs>
      <path d="M39 16c18 0 32 11 32 25S57 66 39 66c-3 0-5 0-8-1-4 4-8 7-13 7 3-3 4-7 3-11C13 57 7 50 7 41c0-14 14-25 32-25z" fill="url(#me)" />
      <path d="M51 42c11 0 19 7 19 15 0 5-3 9-7 12 0 2 0 4 2 6-4 0-6-1-8-3-15 2-25-5-25-15 0-8 8-15 19-15z" fill="#eef3fa" />
      <circle cx="42" cy="57.500" r="3" fill="#1f4c96" /><circle cx="51.500" cy="57.500" r="3" fill="#1f4c96" /><circle cx="61" cy="57.500" r="3" fill="#1f4c96" />
    </Cell>
  );
}

function FaceTime() {
  return (
    <Cell>
      <defs><Grad id="ft" a="#72ec84" b="#34b83c" /></defs>
      <rect x="7" y="17" width="58" height="51" rx="6" fill="url(#ft)" />
      <rect x="16" y="30" width="30" height="25" rx="4" fill="#f6f8f6" />
      <path d="M48 40l10-8v16z" fill="#f6f8f6" />
      <circle cx="57" cy="57" r="16" fill="#f3f6f4" />
      <path d="M48 49c4-4 6 3 5 5-1 2 5 8 8 7 2-2 8 1 4 5-6 5-22-10-17-17z" fill="#44c14c" />
    </Cell>
  );
}

function Pages() {
  return (
    <Cell>
      <g transform="rotate(-7 36 45)">
        <rect x="10" y="14" width="46" height="62" fill="#fafafa" />
        <rect x="10" y="14" width="46" height="12" fill="#f2952f" />
        <text x="25" y="23.500" textAnchor="middle" fontSize="8" fontWeight="600" fill="#fff" fontFamily="Inter">PAGES</text>
        <rect x="14" y="30" width="22" height="17" fill="#2f7ee0" />
        <path d="M18 36q7-7 14 0l-5 8h-4z" fill="#f4872c" />
        <path d="M39 32h15M39 35h15M39 38h15M39 41h15M39 44h15M14 51h36M14 54h36M14 57h34M14 60h32M14 65h30M14 68h28" stroke="#999" strokeWidth="1" />
      </g>
      <path d="M64 14l6 2-13 33-6-3z" fill="#eba03a" />
      <path d="M51 45l6 3-6 18-6-3z" fill="#2a2a2a" />
      <path d="M45 62l6 3-7 9z" fill="#d9d9d9" />
    </Cell>
  );
}

function Numbers() {
  return (
    <Cell>
      <path d="M7 50h64v26H7z" fill="#f4f4f4" />
      <path d="M17 45h11v24H17z" fill="#db3e47" /><path d="M30 33h11v36H30z" fill="#e9872f" />
      <path d="M42.500 15h12v54h-12z" fill="#52bd4a" /><path d="M56 25h11v44H56z" fill="#3a90ee" />
      <path d="M17 45h11v4H17z" fill="#f27e80" /><path d="M30 33h11v4H30z" fill="#f8b65d" />
      <path d="M42.500 15h12v4h-12z" fill="#93e488" /><path d="M56 25h11v4H56z" fill="#85c5f8" />
      <path d="M11 52v16" stroke="#999" strokeWidth="2" strokeDasharray="1.500 3" />
    </Cell>
  );
}

function Keynote() {
  return (
    <Cell>
      <path d="M13 13h52l3 23v4H10v-4z" fill="#3794ea" /><path d="M10 36h58v4H10z" fill="#1c5fb8" />
      <path d="M22 17h34l2 17H20z" fill="#f6f6f6" />
      <text x="32" y="20.500" textAnchor="middle" fontSize="4" fontWeight="700" fill="#555" fontFamily="Inter">KEYNOTE</text>
      <circle cx="31" cy="27.500" r="6" fill="#5a9de8" /><path d="M31 27.500l-6-3a6.500 6.500 0 0 1 9-3z" fill="#e0468e" /><path d="M31 27.500l-6-3c-1 4 0 7 3 9z" fill="#5fc45a" />
      <path d="M42 22h12M42 25h12M42 28h12M42 31h10" stroke="#bbb" strokeWidth="1" />
      <path d="M37.500 40h3.500v34h-3.500z" fill="#d5dade" />
      <ellipse cx="39" cy="74" rx="14" ry="4.500" fill="#cfd8e0" />
    </Cell>
  );
}

function ITunes() {
  return (
    <Cell>
      <defs>
        <linearGradient id="it" x1="0" y1="0" x2=".4" y2="1"><stop offset="0" stopColor="#f5515a" /><stop offset=".5" stopColor="#b45ae0" /><stop offset="1" stopColor="#4fc0f5" /></linearGradient>
        <linearGradient id="it2" x1="0" y1="1" x2=".6" y2="0"><stop offset="0" stopColor="#7b6cf5" /><stop offset=".5" stopColor="#c060c8" /><stop offset="1" stopColor="#f25564" /></linearGradient>
      </defs>
      <circle cx="39" cy="45" r="30.500" fill="#f3f2f8" stroke="url(#it)" strokeWidth="3.500" />
      <path d="M31 30l22-5v29c0 8-12 9-12 3 0-4 4-5 9-5V35l-16 3.500V58c0 8-13 9-13 3 0-5 5-5.500 10-6z" fill="url(#it2)" />
    </Cell>
  );
}

function IBooks() {
  return (
    <Cell>
      <defs><Grad id="ib" a="#f6b22f" b="#dd5a1e" /></defs>
      <circle cx="39" cy="45" r="32" fill="#e6e3e0" /><circle cx="39" cy="45" r="29.500" fill="url(#ib)" />
      <path d="M38 33c-4-4-13-4-18-1v28c6-3 14-2 18 2zM40 33c4-4 13-4 18-1v28c-6-3-14-2-18 2z" fill="#f4f2ef" />
    </Cell>
  );
}

function Remote() {
  return (
    <Cell>
      <defs><Grad id="re" a="#ea5a3e" b="#b93c22" /></defs>
      <rect x="10" y="16" width="59" height="59" rx="2" fill="url(#re)" />
      <path d="M40 53H21V31h30v12M34 53v6M27 59h12" fill="none" stroke="#fff" strokeWidth="2.500" />
      <circle cx="50" cy="53" r="11.500" fill="#cf4a30" stroke="#fff" strokeWidth="2" />
      <path d="M44 51l5 4-5 4M56 47l-5 4 5 4" fill="none" stroke="#fff" strokeWidth="2" />
    </Cell>
  );
}

function AppStore() {
  return (
    <Cell>
      <defs><Grad id="as" a="#4fc3fa" b="#2462e8" /></defs>
      <circle cx="39" cy="45" r="32" fill="#e4e8ee" /><circle cx="39" cy="45" r="29.500" fill="url(#as)" />
      <path d="M17 45.500h44" stroke="#f2f5fa" strokeWidth="4.500" />
      <path d="M37 28L21 58M39 26l17 32" stroke="#f2f5fa" strokeWidth="5" strokeLinecap="round" />
      <circle cx="64" cy="22" r="14.500" fill="#e0483f" />
      <text x="64" y="28" textAnchor="middle" fontSize="17" fill="#fff" fontFamily="Inter">7</text>
    </Cell>
  );
}

function Prefs() {
  return (
    <Cell>
      <defs><Grad id="pr" a="#c9d6dc" b="#7f7f7f" /></defs>
      <rect x="8" y="15" width="63" height="60" rx="3" fill="url(#pr)" />
      <circle cx="39" cy="45" r="28" fill="#232323" />
      {rays(30).map((a) => (
        <path key={a} d="M39 22v5" stroke="#b9b9b9" strokeWidth="2" transform={`rotate(${a} 39 45)`} />
      ))}
      <circle cx="39" cy="45" r="17" fill="none" stroke="#b4b4b4" strokeWidth="4.500" />
      {[90, 210, 330].map((a) => (
        <path key={a} d="M39 45V29" stroke="#b4b4b4" strokeWidth="4" transform={`rotate(${a} 39 45)`} />
      ))}
      <circle cx="39" cy="45" r="4.500" fill="#9a9a9a" />
    </Cell>
  );
}

function Lens() {
  return (
    <Cell>
      <circle cx="30" cy="32" r="21" fill="#484848" />
      <path d="M12 27c8-12 30-12 38 2" fill="none" stroke="#b44a31" strokeWidth="2" />
      <circle cx="28" cy="43" r="23.500" fill="#1f1f1f" stroke="#666" strokeWidth="1.500" />
      <circle cx="28" cy="43" r="17" fill="#333" stroke="#888" strokeWidth="1.500" />
      <circle cx="28" cy="43" r="10" fill="#6a6a6a" />
      <path d="M32 48h44v31H32z" fill="#222" stroke="#777" strokeWidth="1.500" />
      <path d="M35 78l8-26 5 10 5-12 6 17 5-4 5 15z" fill="#96c33a" />
      <path d="M34 74c12 0 12-6 19-14s10-8 21-8" fill="none" stroke="#eee" strokeWidth="1.800" />
    </Cell>
  );
}

function Camera() {
  return (
    <Cell>
      <path d="M20 18l6-9h20l5 9 8 3q4 1 4 5v27q0 5-5 5H7q-5 0-5-5V26q0-5 5-6z" fill="#4c4c4c" />
      <path d="M24 12h22v8H22z" fill="#606060" />
      <circle cx="12" cy="27" r="4" fill="#2b2b2b" />
      <circle cx="38" cy="40" r="17" fill="#242424" stroke="#6c6c6c" strokeWidth="1.500" />
      <circle cx="38" cy="40" r="11" fill="#555" stroke="#999" strokeWidth="1" />
      <path d="M25 28c6-7 20-7 26 0" fill="none" stroke="#c04b32" strokeWidth="2" />
      <path d="M26 45h50v31H26z" fill="#d9dde0" /><path d="M28 47h46v26H28z" fill="#3072ac" />
      <path d="M46 76h8l2 4H44z" fill="#c5cace" />
    </Cell>
  );
}

function Doodads() {
  const bits: [number, number, string, number][] = [
    [17, 45, "#3f9db0", 30], [34, 43, "#2f97ae", 0], [8, 54, "#9ab86a", 0], [11, 65, "#cfc64a", -28], [34, 71, "#d9c04e", 0], [54, 66, "#e6a6bd", 30], [60, 54, "#b99ac6", 5],
  ];
  return (
    <Cell>
      <rect x="4" y="12" width="60" height="60" rx="4" fill="#2b211f" stroke="#56463f" strokeWidth="1.500" />
      <path d="M34 13h26q3 0 3 3v36C48 46 38 34 34 13z" fill="#6c625e" opacity=".6" />
      {bits.map(([x, y, c, a]) => (
        <g key={x + y} transform={`rotate(${a} ${x + 5} ${y})`}>
          <rect x={x - 1} y={y} width="12" height="7" fill={c} opacity=".8" />
          <rect x={x - 1} y={y - 4} width="11" height="8" fill="#e9e9e6" />
        </g>
      ))}
      <path d="M65 17l6 2-12 32-7-2z" fill="#d6d6d6" />
      <path d="M67 18l2 1-11 31-2-1z" fill="#fff" />
      <path d="M50 47l9 2c-2 8-5 12-11 15z" fill="#a8a8a8" />
    </Cell>
  );
}

function Preview() {
  return (
    <Cell dot="#4a0000">
      <defs><Grad id="pv" a="#e8931f" b="#f6c544" /></defs>
      <g transform="rotate(-7 36 45)">
        <rect x="8" y="17" width="56" height="56" rx="3" fill="#eab05c" />
        <rect x="16" y="25" width="39" height="37" fill="#fdf6e8" />
        <rect x="18" y="27" width="35" height="33" fill="url(#pv)" />
        <path d="M18 60v-4c8-3 20-3 35-1v5z" fill="#2e190f" />
        <path d="M33 57c1-5 0-9-3-12l2-1c3 3 4 8 3 13z" fill="#2e190f" />
        <ellipse cx="26" cy="45" rx="6" ry="2" fill="#2e190f" transform="rotate(-20 26 45)" />
        <ellipse cx="36" cy="43" rx="6" ry="2" fill="#2e190f" transform="rotate(12 36 43)" />
        <ellipse cx="30" cy="41" rx="2" ry="5" fill="#2e190f" transform="rotate(20 30 41)" />
        <ellipse cx="27" cy="49" rx="5" ry="1.800" fill="#2e190f" transform="rotate(-50 27 49)" />
      </g>
      <path d="M62 12l6 1-11 48-8-2z" fill="#3f90dc" />
      <path d="M49 59l8 2-2 10-8-2z" fill="#c9c9c9" />
      <path d="M47 69l7 2c-1 4-3 6-7 9z" fill="#8a4a20" />
    </Cell>
  );
}

function TextFile() {
  return (
    <Cell>
      <path d="M27 10h18v8H27z" fill="#e9f3e9" stroke="#2b5b30" strokeWidth="1" />
      <rect x="11" y="19" width="6" height="56" fill="#151515" />
      <path d="M12 17h47v4h2v57H14z" fill="#f5f5f5" />
      <path d="M13 20v56" stroke="#fff" strokeWidth="3" strokeDasharray="3 3" />
      <path d="M26 27h22" stroke="#666" strokeWidth="1.600" />
      <path d="M19 34h20M19 38h34M19 42h30M19 46h34M19 50h32M19 54h34M19 58h28M19 62h34M19 66h30M19 70h32" stroke="#9a9a9a" strokeWidth="1.100" />
      <path d="M42 18l19 24V20z" fill="#fff" stroke="#bbb" strokeWidth="1" />
    </Cell>
  );
}

function NotesFile() {
  return (
    <Cell>
      <path d="M17 10h42v70H17z" fill="#f8f8f7" /><path d="M17 13h17v67H17z" fill="#ececea" />
      <path d="M19 17h13M19 22h10M19 27h12M19 32h10M19 37h12M19 42h11M19 47h12M19 52h10M19 57h12M19 62h10M19 67h12M19 72h10" stroke="#8e8e8e" strokeWidth="1.200" />
      <path d="M36 18h16M36 22h19M36 26h17M36 30h14M36 36h19M36 40h16M36 46h18M36 52h12M36 58h18M36 62h14M36 68h12M36 72h14" stroke="#777" strokeWidth="1.200" />
      <g transform="rotate(-6 60 67)">
        <rect x="50" y="55" width="20" height="24" fill="#fbfbf5" /><rect x="50" y="55" width="20" height="5" fill="#f2c53d" />
        <path d="M51 64h18M51 68h18M51 72h18" stroke="#d5d5d5" />
      </g>
    </Cell>
  );
}

function Trash() {
  return (
    <Cell>
      <defs><linearGradient id="tr"><stop offset="0" stopColor="#d9d9d9" /><stop offset=".5" stopColor="#f0f0f0" /><stop offset="1" stopColor="#bdbdbd" /></linearGradient></defs>
      <path d="M16 20l8-8 6 6 5-8 9 7 6-8 6 10 6 3-6 8H20z" fill="#f3f3f3" />
      <path d="M22 16l6 4-4 6zM36 17l8 2-5 6zM48 12l6 7-8 5z" fill="#3b4a52" />
      <path d="M34 16l5 2-3 4z" fill="#35b0c8" /><path d="M46 20l6 1-3 4z" fill="#b9582d" />
      <path d="M14 20c4 7 46 7 51 0l-6 51c-3 9-36 9-39 0z" fill="url(#tr)" />
      <path d="M13 18c1 9 51 9 53 0" fill="none" stroke="#e9e9e9" strokeWidth="2.500" />
      <path d="M26 34l4 34M39 30l-3 40M52 32l-6 38" stroke="#d6d6d6" strokeWidth="1.500" />
    </Cell>
  );
}

function Rough({ id, scale }: { id: string; scale: number }) {
  return (
    <filter id={id} x="0" y="0" width="1" height="1">
      <feTurbulence type="fractalNoise" baseFrequency=".09" numOctaves="4" seed="4" />
      <feDisplacementMap in="SourceGraphic" scale={scale} xChannelSelector="R" yChannelSelector="G" />
    </filter>
  );
}

function RocksLeft() {
  return (
    <svg viewBox="0 0 286 96" className="h-[96px] w-[286px] shrink-0">
      <defs><Rough id="rl" scale={9} /></defs>
      <path d="M0 0h286v96H0z" fill="#0a0606" />
      <g filter="url(#rl)">
        <path d="M-10-10h306v116H-10z" fill="#0a0606" />
        <path d="M-10 10l40-7 30 6 22 20-4 24-20-2-68-17z" fill="#1d1714" />
        <path d="M132 14l26-12h48l16 40-28 5-66-3z" fill="#1b1512" />
        <path d="M-10 40l54 2 32 12 30 52H-10z" fill="#1a1411" />
        <path d="M130 64l40-13 52 6 20 49H126z" fill="#191310" />
        <path d="M78 46l32 6 14 24-20-4z" fill="#130e0c" />
        <path d="M220 60l26-6 22 52h-34z" fill="#271b15" />
        <path d="M240-10l18 12 28 60V-10z" fill="#140d0a" />
        <path d="M10 70l30 4 20 14M150 66l40 8 30 20M20 20l30 4" fill="none" stroke="#241c18" strokeWidth="3" />
      </g>
    </svg>
  );
}

function RocksRight() {
  return (
    <svg viewBox="0 0 286 96" className="h-[96px] w-[286px] shrink-0">
      <defs><Rough id="rr" scale={26} /></defs>
      <path d="M0 0h286v96H0z" fill="#1a2130" />
      <g filter="url(#rr)">
        <path d="M-20-20h326v136H-20z" fill="#1a2130" />
        <path d="M106-20l12 36-8 24 18 14 8 40 40 22h60l14-40-10-30 12-66z" fill="#3c475c" />
        <path d="M6 6l16 8 18-6 12 14-18 10 16 8-24 4L6 30zM60 4l14 6 6 14-12 4zM70 40l18 4 10 12-20-2zM96 6l10 8 2 18-10-6z" fill="#46546b" />
        <path d="M38-20h42l14 34 10 24-16 8-18-10-12-18z" fill="#12151e" />
        <path d="M138 34l12 4 4 32-12 8zM158 40l12 16-4 28-11-8zM194 22l10 4-1 22-10-4zM110 14l12 10-4 18zM170 4l8 4-2 10z" fill="#0e121a" />
        <path d="M224-20h82v136h-96l8-60z" fill="#161924" />
        <path d="M264 28l12-4 6 20-10 10zM240 60l8-8 8 20-8 8zM268 70l12-2 4 20-10 2z" fill="#343d50" />
        <path d="M-20 56l42-10 24 6 12 10 22-2 18 16 30 50H-20z" fill="#5e3327" />
        <path d="M0 54l12-4 8 8-10 6zM28 50l14 2 4 8-14-2zM48 64l14-2 6 10-14 2zM76 66l12 4 4 12-14-4zM16 72l14-2 6 10-14 4zM54 82l14-2 6 12H56zM4 84l10 2-2 10H2zM36 84l8 2-2 8zM92 86l10 2 2 10H92zM64 72l8 4-2 6z" fill="#dc926c" />
        <path d="M14 62l14-2 2 10-12 2zM40 70l10 2 2 16-12-4zM68 58l8 8-4 8zM28 88l14-2 2 14H30zM78 82l8 2-2 14z" fill="#1f110f" />
        <path d="M126 68l10-6 6 12 2 16-10 4-8-12zM150 86l10-2 8 20h-18z" fill="#c47a55" />
      </g>
    </svg>
  );
}

function Dock() {
  return (
    <div className="flex h-[96px] bg-[#0b0808]">
      <RocksLeft />
      <div className="flex h-[96px] w-[2308px] shrink-0 rounded-t-[10px] bg-[linear-gradient(90deg,#5b5355,#605557_12%,#5a5356_40%,#5d5357_51%,#5f6070_56%,#61646f_64%,#6f7991_73%,#706f7c_77%,#8d6c6a_79.500%,#a86d59_82%,#c27555_87%,#a96b5b_94%,#8d6763)] pl-[6px]">
        <Finder /><Siri /><Launchpad /><Mail /><ChromeIcon /><Safari /><Contacts /><Calendar /><Notes /><Reminders />
        <Maps /><Photos /><Messages /><FaceTime /><Pages /><Numbers /><Keynote /><ITunes /><IBooks /><Remote />
        <AppStore /><Prefs /><Lens /><Camera /><Doodads /><Preview />
        <span className="ml-[18px] mr-[13px] mt-[12px] h-[72px] w-[2px] bg-[#8a4a33]" />
        <TextFile /><NotesFile /><Trash />
      </div>
      <RocksRight />
    </div>
  );
}

export default function App() {
  return (
    <div className="flex h-[1800px] w-[2880px] flex-col overflow-hidden bg-[linear-gradient(90deg,#7d5a5b,#4a4658)] font-['Inter',sans-serif]">
      <MenuBar />
      <div className="h-[1658px] bg-[linear-gradient(180deg,transparent_50%,#0b0a0f_50%)]">
        <TabStrip />
        <AddressBar />
        <BookmarkBar />
        <WireToolbar />
        <Canvas />
      </div>
      <Dock />
    </div>
  );
}
